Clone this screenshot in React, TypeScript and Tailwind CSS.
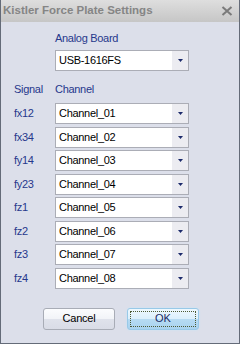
import React from "react";

const rows = [
  ["fx12", "Channel_01"],
  ["fx34", "Channel_02"],
  ["fy14", "Channel_03"],
  ["fy23", "Channel_04"],
  ["fz1", "Channel_05"],
  ["fz2", "Channel_06"],
  ["fz3", "Channel_07"],
  ["fz4", "Channel_08"],
];

const Combo = ({ value }: { value: string }) => (
  <div className="flex h-[21px] w-[134px] items-stretch border border-[#abadb6] bg-white">
    <div className="flex flex-1 items-center pl-[3px] text-[11px] tracking-[-0.3px] text-black">
      {value}
    </div>
    <div className="flex w-[16px] items-center justify-center bg-[#ececf1]">
      <svg width="5" height="3" viewBox="0 0 5 3">
        <path d="M0 0H5L2.5 3Z" fill="#1c2a6b" />
      </svg>
    </div>
  </div>
);

export default function App() {
  return (
    <div
      className="flex h-[344px] w-[240px] flex-col border-x border-b border-[#646b78] bg-[#dcdfea]"
      style={{ fontFamily: '"Liberation Sans", Arial, sans-serif' }}
    >
      {/* title bar */}
      <div className="flex h-[22px] shrink-0 items-center justify-between bg-gradient-to-b from-[#dedede] to-[#c6c6c6] pl-[2px] pr-[6px]">
        <span className="text-[11.5px] font-bold text-[#858585]">
          Kistler Force Plate Settings
        </span>
        <svg width="12" height="10" viewBox="0 0 12 10">
          <path d="M1.5 1L10.5 9M10.5 1L1.5 9" stroke="#7a7a7a" strokeWidth="2" />
        </svg>
      </div>

      <div className="flex flex-col pl-[54px] pt-[9px]">
        <div className="h-[14px] text-[11px] leading-[14px] tracking-[-0.3px] text-[#26388c]">
          Analog Board
        </div>
        <div className="mt-[5px]">
          <Combo value="USB-1616FS" />
        </div>
      </div>

      <div className="mt-[11px] flex h-[14px] pl-[13px] text-[11px] leading-[14px] tracking-[-0.3px] text-[#26388c]">
        <span className="w-[41px]">Signal</span>
        <span>Channel</span>
      </div>

      <div className="mt-[7px] flex flex-col gap-[2.5px] pl-[13px]">
        {rows.map(([sig, ch]) => (
          <div className="flex items-center" key={sig}>
            <span className="w-[41px] text-[11px] tracking-[-0.3px] text-[#26388c]">{sig}</span>
            <Combo value={ch} />
          </div>
        ))}
      </div>

      <div className="mt-[19px] flex gap-[12px] pl-[42px]">
        <button className="h-[22px] w-[72px] rounded-[3px] border border-[#a8acb6] bg-[linear-gradient(#fbfcfe_0%,#f2f4f8_48%,#dfe2eb_52%,#d9dce6_100%)] text-[11px] tracking-[-0.2px] text-black">
          Cancel
        </button>
        <button className="relative h-[22px] w-[72px] rounded-[3px] border border-[#98c9e8] bg-[linear-gradient(#eef8fe_0%,#dcf0fc_48%,#b6dbf3_52%,#a9d3ef_100%)] text-[11px] text-[#1b2a66] shadow-[0_0_2px_#c6e6fa]">
          <span className="absolute inset-[2px] border border-dotted border-[#4d5a34]" />
          OK
        </button>
      </div>
    </div>
  );
}
